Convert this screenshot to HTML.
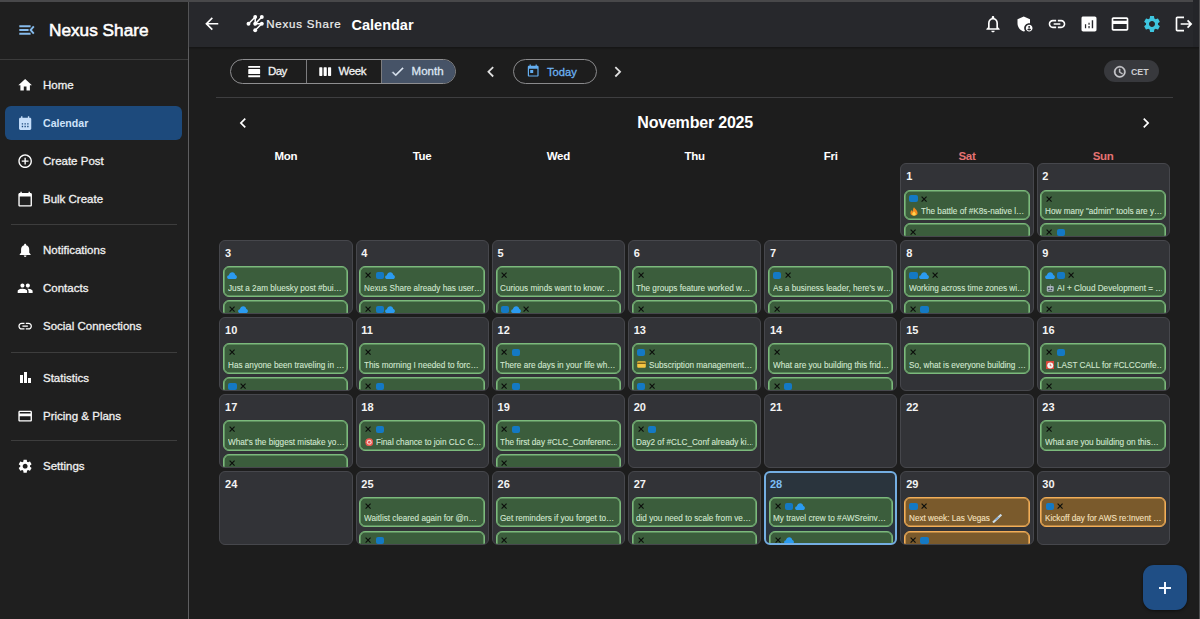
<!DOCTYPE html>
<html><head><meta charset="utf-8"><style>
*{box-sizing:border-box;margin:0;padding:0}
html,body{width:1200px;height:619px;overflow:hidden;background:#1d1d1d;font-family:"Liberation Sans",sans-serif;color:#fff}
.abs{position:absolute}
.t{line-height:1;white-space:nowrap}
.cell{border-radius:6px;overflow:hidden}
.card{border-radius:6px}
</style></head><body>
<div class="abs" style="left:0;top:0;width:188px;height:619px;background:#1f1f1f"></div>
<svg class="abs" style="left:0;top:0;width:40px;height:40px" viewBox="0 0 40 40"><g stroke="#86bbec" stroke-width="1.9" fill="none"><path d="M19.3 26.2H30.6M19.3 30H28.6M19.3 33.8H30.6"/><path d="M33.8 26.4L30.6 30L33.8 33.6" stroke-linejoin="miter"/></g></svg>
<div class="abs t" style="left:49.2px;top:21.67px;font-size:17.4px;color:#fff;font-weight:normal;-webkit-text-stroke:0.55px #fff;transform:scaleX(0.99);transform-origin:0 0">Nexus Share</div>
<div class="abs" style="left:0;top:58.5px;width:188px;height:1.2px;background:#3b3b3b"></div>
<div class="abs" style="left:5px;top:106px;width:177px;height:34px;border-radius:6px;background:#1d4a7c"></div>
<svg class="abs" style="left:17.05px;top:76.75px;width:16.3px;height:16.3px" viewBox="0 0 24 24"><path fill="#fff" d="M10 20v-6h4v6h5v-8h3L12 3 2 12h3v8z"/></svg>
<div class="abs t" style="left:43px;top:79.77px;font-size:11.5px;color:#f0f0f0;font-weight:normal;-webkit-text-stroke:0.3px #f0f0f0">Home</div>
<svg class="abs" style="left:17.05px;top:115.35px;width:16.3px;height:16.3px" viewBox="0 0 24 24"><path fill="#c5defa" d="M19 4h-1V2h-2v2H8V2H6v2H5c-1.11 0-1.99.9-1.99 2L3 20c0 1.1.89 2 2 2h14c1.1 0 2-.9 2-2V6c0-1.1-.9-2-2-2zM9 14H7v-2h2v2zm4 0h-2v-2h2v2zm4 0h-2v-2h2v2zm-8 4H7v-2h2v2zm4 0h-2v-2h2v2zm4 0h-2v-2h2v2z"/></svg>
<div class="abs t" style="left:43px;top:118.27px;font-size:11.5px;color:#cfe3fa;font-weight:bold;transform:scaleX(0.92);transform-origin:0 0">Calendar</div>
<svg class="abs" style="left:17.05px;top:153.15px;width:16.3px;height:16.3px" viewBox="0 0 24 24"><path fill="#fff" d="M13 7h-2v4H7v2h4v4h2v-4h4v-2h-4V7zm-1-5C6.48 2 2 6.48 2 12s4.48 10 10 10 10-4.48 10-10S17.52 2 12 2zm0 18c-4.41 0-8-3.59-8-8s3.59-8 8-8 8 3.59 8 8-3.59 8-8 8z"/></svg>
<div class="abs t" style="left:43px;top:156.17px;font-size:11.5px;color:#f0f0f0;font-weight:normal;-webkit-text-stroke:0.3px #f0f0f0">Create Post</div>
<svg class="abs" style="left:17.05px;top:191.25px;width:16.3px;height:16.3px" viewBox="0 0 24 24"><path fill="#fff" d="M20 3h-1V1h-2v2H7V1H5v2H4c-1.1 0-2 .9-2 2v16c0 1.1.9 2 2 2h16c1.1 0 2-.9 2-2V5c0-1.1-.9-2-2-2zm0 18H4V8h16v13z"/></svg>
<div class="abs t" style="left:43px;top:194.27px;font-size:11.5px;color:#f0f0f0;font-weight:normal;-webkit-text-stroke:0.3px #f0f0f0">Bulk Create</div>
<svg class="abs" style="left:17.05px;top:242.25px;width:16.3px;height:16.3px" viewBox="0 0 24 24"><path fill="#fff" d="M12 22c1.1 0 2-.9 2-2h-4c0 1.1.89 2 2 2zm6-6v-5c0-3.07-1.64-5.64-4.5-6.32V4c0-.83-.67-1.5-1.5-1.5s-1.5.67-1.5 1.5v.68C7.63 5.36 6 7.92 6 11v5l-2 2v1h16v-1l-2-2z"/></svg>
<div class="abs t" style="left:43px;top:245.27px;font-size:11.5px;color:#f0f0f0;font-weight:normal;-webkit-text-stroke:0.3px #f0f0f0">Notifications</div>
<svg class="abs" style="left:17.05px;top:280.35px;width:16.3px;height:16.3px" viewBox="0 0 24 24"><path fill="#fff" d="M16 11c1.66 0 2.99-1.34 2.99-3S17.66 5 16 5c-1.66 0-3 1.34-3 3s1.34 3 3 3zm-8 0c1.66 0 2.99-1.34 2.99-3S9.66 5 8 5C6.34 5 5 6.34 5 8s1.34 3 3 3zm0 2c-2.33 0-7 1.17-7 3.5V19h14v-2.5c0-2.33-4.67-3.5-7-3.5zm8 0c-.29 0-.62.02-.97.05 1.16.84 1.97 1.97 1.97 3.45V19h6v-2.5c0-2.33-4.67-3.5-7-3.5z"/></svg>
<div class="abs t" style="left:43px;top:283.37px;font-size:11.5px;color:#f0f0f0;font-weight:normal;-webkit-text-stroke:0.3px #f0f0f0">Contacts</div>
<svg class="abs" style="left:17.05px;top:318.45px;width:16.3px;height:16.3px" viewBox="0 0 24 24"><path fill="#fff" d="M3.9 12c0-1.71 1.39-3.1 3.1-3.1h4V7H7c-2.76 0-5 2.24-5 5s2.24 5 5 5h4v-1.9H7c-1.71 0-3.1-1.39-3.1-3.1zM8 13h8v-2H8v2zm9-6h-4v1.9h4c1.71 0 3.1 1.39 3.1 3.1s-1.39 3.1-3.1 3.1h-4V17h4c2.76 0 5-2.24 5-5s-2.24-5-5-5z"/></svg>
<div class="abs t" style="left:43px;top:321.47px;font-size:11.5px;color:#f0f0f0;font-weight:normal;-webkit-text-stroke:0.3px #f0f0f0">Social Connections</div>
<div class="abs" style="left:19.9px;top:375.1px;width:3.1px;height:7.8px;background:#fff"></div><div class="abs" style="left:24px;top:371.8px;width:3.1px;height:11.1px;background:#fff"></div><div class="abs" style="left:28px;top:377.6px;width:3px;height:5.3px;background:#fff"></div>
<div class="abs t" style="left:43px;top:372.57px;font-size:11.5px;color:#f0f0f0;font-weight:normal;-webkit-text-stroke:0.3px #f0f0f0">Statistics</div>
<svg class="abs" style="left:17.05px;top:407.75px;width:16.3px;height:16.3px" viewBox="0 0 24 24"><path fill="#fff" d="M20 4H4c-1.11 0-1.99.89-1.99 2L2 18c0 1.11.89 2 2 2h16c1.11 0 2-.89 2-2V6c0-1.11-.89-2-2-2zm0 14H4v-6h16v6zm0-10H4V6h16v2z"/></svg>
<div class="abs t" style="left:43px;top:410.77px;font-size:11.5px;color:#f0f0f0;font-weight:normal;-webkit-text-stroke:0.3px #f0f0f0">Pricing &amp; Plans</div>
<svg class="abs" style="left:17.05px;top:458.25px;width:16.3px;height:16.3px" viewBox="0 0 24 24"><path fill="#fff" d="M19.14 12.94c.04-.3.06-.61.06-.94 0-.32-.02-.64-.07-.94l2.03-1.58c.18-.14.23-.41.12-.61l-1.92-3.32c-.12-.22-.37-.29-.59-.22l-2.39.96c-.5-.38-1.03-.7-1.62-.94l-.36-2.54c-.04-.24-.24-.41-.48-.41h-3.84c-.24 0-.43.17-.47.41l-.36 2.54c-.59.24-1.13.57-1.62.94l-2.39-.96c-.22-.08-.47 0-.59.22L2.74 8.87c-.12.21-.08.47.12.61l2.03 1.58c-.05.3-.09.63-.09.94s.02.64.07.94l-2.03 1.58c-.18.14-.23.41-.12.61l1.92 3.32c.12.22.37.29.59.22l2.39-.96c.5.38 1.03.7 1.62.94l.36 2.54c.05.24.24.41.48.41h3.84c.24 0 .44-.17.47-.41l.36-2.54c.59-.24 1.13-.56 1.62-.94l2.39.96c.22.08.47 0 .59-.22l1.92-3.32c.12-.22.07-.47-.12-.61l-2.01-1.58zM12 15.6c-1.98 0-3.6-1.62-3.6-3.6s1.62-3.6 3.6-3.6 3.6 1.62 3.6 3.6-1.62 3.6-3.6 3.6z"/></svg>
<div class="abs t" style="left:43px;top:461.27px;font-size:11.5px;color:#f0f0f0;font-weight:normal;-webkit-text-stroke:0.3px #f0f0f0">Settings</div>
<div class="abs" style="left:10.5px;top:224.0px;width:166px;height:1.2px;background:#3d3d3d"></div>
<div class="abs" style="left:10.5px;top:351.5px;width:166px;height:1.2px;background:#3d3d3d"></div>
<div class="abs" style="left:10.5px;top:440.3px;width:166px;height:1.2px;background:#3d3d3d"></div>
<div class="abs" style="left:188px;top:0;width:1.2px;height:619px;background:#5e5e60"></div>
<div class="abs" style="left:189px;top:0;width:1011px;height:46.5px;background:#27282c;box-shadow:0 1px 2px rgba(0,0,0,.35)"></div>
<div class="abs" style="left:0;top:0;width:1200px;height:1.6px;background:#48484a"></div>
<svg class="abs" style="left:201.8px;top:13.8px;width:19.5px;height:19.5px" viewBox="0 0 24 24"><path fill="#fff" d="M20 11H7.83l5.59-5.59L12 4l-8 8 8 8 1.41-1.41L7.83 13H20v-2z"/></svg>
<svg class="abs" style="left:244px;top:12px;width:24px;height:24px" viewBox="244 12 24 24">
<g stroke="#fff" stroke-width="1.5" fill="none"><path d="M248.5 23.8L255.2 17L255.2 23.8L261.8 17M255.2 23.8L261.8 23.8L255.2 30.2"/></g>
<g fill="#fff"><circle cx="248.5" cy="23.8" r="1.95"/><circle cx="255.2" cy="17" r="1.95"/><circle cx="261.8" cy="17" r="1.95"/>
<circle cx="255.2" cy="23.8" r="1.95"/><circle cx="261.8" cy="23.8" r="1.95"/><circle cx="255.2" cy="30.2" r="1.95"/></g></svg>
<div class="abs t" style="left:266.2px;top:18.97px;font-size:11.5px;color:#f0f0f0;font-weight:normal;letter-spacing:0.8px;-webkit-text-stroke:0.2px #f0f0f0">Nexus Share</div>
<div class="abs t" style="left:351.5px;top:17.83px;font-size:14.5px;color:#fff;font-weight:bold">Calendar</div>
<svg class="abs" style="left:983.4px;top:14.0px;width:20px;height:20px" viewBox="0 0 24 24"><path fill="#fff" d="M12 22c1.1 0 2-.9 2-2h-4c0 1.1.9 2 2 2zm6-6v-5c0-3.07-1.63-5.64-4.5-6.32V4c0-.83-.67-1.5-1.5-1.5s-1.5.67-1.5 1.5v.68C7.64 5.36 6 7.92 6 11v5l-2 2v1h16v-1l-2-2zm-2 1H8v-6c0-2.48 1.51-4.5 4-4.5s4 2.02 4 4.5v6z"/></svg>
<svg class="abs" style="left:1014.8px;top:14.0px;width:20px;height:20px" viewBox="0 0 24 24"><path fill="#fff" d="M17 11c.34 0 .67.04 1 .09V6.27L10.5 3 3 6.27v4.91c0 4.54 3.2 8.79 7.5 9.82.55-.13 1.08-.32 1.6-.55-.69-.98-1.1-2.17-1.1-3.45 0-3.31 2.69-6 6-6zM17 13c-2.21 0-4 1.79-4 4s1.79 4 4 4 4-1.79 4-4-1.79-4-4-4zm0 1.38c.62 0 1.120.51 1.12 1.12s-.51 1.12-1.12 1.12-1.12-.51-1.12-1.12.5-1.12 1.12-1.12zm0 5.37c-.93 0-1.74-.46-2.24-1.17.05-.72 1.51-1.080 2.24-1.08s2.19.36 2.24 1.08c-.5.71-1.31 1.17-2.24 1.17z"/></svg>
<svg class="abs" style="left:1047.0px;top:14.0px;width:20px;height:20px" viewBox="0 0 24 24"><path fill="#fff" d="M3.9 12c0-1.71 1.39-3.1 3.1-3.1h4V7H7c-2.76 0-5 2.24-5 5s2.24 5 5 5h4v-1.9H7c-1.71 0-3.1-1.39-3.1-3.1zM8 13h8v-2H8v2zm9-6h-4v1.9h4c1.71 0 3.1 1.39 3.1 3.1s-1.39 3.1-3.1 3.1h-4V17h4c2.76 0 5-2.24 5-5s-2.24-5-5-5z"/></svg>
<svg class="abs" style="left:1078.7px;top:14.0px;width:20px;height:20px" viewBox="0 0 24 24"><path fill="#fff" d="M19 3H5c-.6 0-2 .4-2 2v14c0 1.1.9 2 2 2h14c1.1 0 2-.9 2-2V5c0-1.1-.9-2-2-2zM8.6 17H7.1v-4.8h1.5V17zm4.2 0h-1.5v-2.5h1.5V17zm0-4.2h-1.5v-2.2h1.5v2.2zm4.2 4.2h-1.7V7.5h1.7V17z"/></svg>
<svg class="abs" style="left:1110.3px;top:14.0px;width:20px;height:20px" viewBox="0 0 24 24"><path fill="#fff" d="M20 4H4c-1.11 0-1.99.89-1.99 2L2 18c0 1.11.89 2 2 2h16c1.11 0 2-.89 2-2V6c0-1.11-.89-2-2-2zm0 14H4v-6h16v6zm0-10H4V6h16v2z"/></svg>
<svg class="abs" style="left:1142.3px;top:14.0px;width:20px;height:20px" viewBox="0 0 24 24"><path fill="#3ec6e0" d="M19.14 12.94c.04-.3.06-.61.06-.94 0-.32-.02-.64-.07-.94l2.03-1.58c.18-.14.23-.41.12-.61l-1.92-3.32c-.12-.22-.37-.29-.59-.22l-2.39.96c-.5-.38-1.03-.7-1.62-.94l-.36-2.54c-.04-.24-.24-.41-.48-.41h-3.84c-.24 0-.43.17-.47.41l-.36 2.54c-.59.24-1.13.57-1.62.94l-2.39-.96c-.22-.08-.47 0-.59.22L2.74 8.87c-.12.21-.08.47.12.61l2.03 1.58c-.05.3-.09.63-.09.94s.02.64.07.94l-2.03 1.58c-.18.14-.23.41-.12.61l1.92 3.32c.12.22.37.29.59.22l2.39-.96c.5.38 1.03.7 1.62.94l.36 2.54c.05.24.24.41.48.41h3.84c.24 0 .44-.17.47-.41l.36-2.54c.59-.24 1.13-.56 1.62-.94l2.39.96c.22.08.47 0 .59-.22l1.92-3.32c.12-.22.07-.47-.12-.61l-2.01-1.58zM12 15.6c-1.98 0-3.6-1.62-3.6-3.6s1.62-3.6 3.6-3.6 3.6 1.62 3.6 3.6-1.62 3.6-3.6 3.6z"/></svg>
<svg class="abs" style="left:1174.1px;top:14.0px;width:20px;height:20px" viewBox="0 0 24 24"><path fill="#fff" d="M17 7l-1.41 1.41L18.17 11H8v2h10.17l-2.58 2.58L17 17l5-5zM4 5h8V3H4c-1.1 0-2 .9-2 2v14c0 1.1.9 2 2 2h8v-2H4V5z"/></svg>
<div class="abs" style="left:1193px;top:0;width:6px;height:46.5px;background:#242529"></div>
<div class="abs" style="left:1199px;top:0;width:1px;height:619px;background:#4c4c4e"></div>
<div class="abs" style="left:230px;top:58.8px;width:226.4px;height:25px;border:1.2px solid #8e8e90;border-radius:12.5px;overflow:hidden"><div class="abs" style="left:150px;top:0;width:80px;height:25px;background:#465367"></div><div class="abs" style="left:74.6px;top:0;width:1.2px;height:25px;background:#7c7c7e"></div><div class="abs" style="left:149.6px;top:0;width:1.2px;height:25px;background:#7c7c7e"></div></div>
<svg class="abs" style="left:246.6px;top:64.0px;width:15px;height:15px" viewBox="0 0 24 24"><path fill="#fff" d="M2 21h19v-3H2v3zM20 8H3c-.55 0-1 .45-1 1v6c0 .55.45 1 1 1h17c.55 0 1-.45 1-1V9c0-.55-.45-1-1-1zM2 3v3h19V3H2z"/></svg>
<div class="abs t" style="left:267.9px;top:66.17px;font-size:11.5px;color:#f2f2f2;font-weight:normal;letter-spacing:-0.5px;-webkit-text-stroke:0.3px #f2f2f2">Day</div>
<svg class="abs" style="left:317.5px;top:63.6px;width:15px;height:15px" viewBox="0 0 24 24"><path fill="#fff" d="M6 5H3c-.55 0-1 .45-1 1v12c0 .55.45 1 1 1h3c.55 0 1-.45 1-1V6c0-.55-.45-1-1-1zm14 0h-3c-.55 0-1 .45-1 1v12c0 .55.45 1 1 1h3c.55 0 1-.45 1-1V6c0-.55-.45-1-1-1zm-7 0h-3c-.55 0-1 .45-1 1v12c0 .55.45 1 1 1h3c.55 0 1-.45 1-1V6c0-.55-.45-1-1-1z"/></svg>
<div class="abs t" style="left:338.6px;top:66.17px;font-size:11.5px;color:#f2f2f2;font-weight:normal;letter-spacing:-0.4px;-webkit-text-stroke:0.3px #f2f2f2">Week</div>
<svg class="abs" style="left:390.2px;top:63.5px;width:15.3px;height:15.3px;stroke:#dde6f2;stroke-width:0.6" viewBox="0 0 24 24"><path fill="#dde6f2" d="M9 16.17L4.83 12l-1.42 1.41L9 19 21 7l-1.41-1.41z"/></svg>
<div class="abs t" style="left:411.6px;top:66.27px;font-size:11.5px;color:#dde6f2;font-weight:normal;-webkit-text-stroke:0.3px #dde6f2">Month</div>
<svg class="abs" style="left:480.3px;top:60.9px;width:21.5px;height:21.5px" viewBox="0 0 24 24"><path fill="#e0e0e0" d="M15.41 7.41L14 6l-6 6 6 6 1.41-1.41L10.83 12z"/></svg>
<div class="abs" style="left:513.3px;top:58.8px;width:83.4px;height:25.6px;border:1.2px solid #8a8a8c;border-radius:13px"></div>
<svg class="abs" style="left:525.7px;top:64.2px;width:14.4px;height:14.4px" viewBox="0 0 24 24"><path fill="#64aef0" d="M19 3h-1V1h-2v2H8V1H6v2H5c-1.11 0-1.99.9-1.99 2L3 19c0 1.1.89 2 2 2h14c1.1 0 2-.9 2-2V5c0-1.1-.9-2-2-2zm0 16H5V8h14v11zM7 10h5v5H7z"/></svg>
<div class="abs t" style="left:547.0px;top:67.12px;font-size:11.2px;color:#6cb2f2;font-weight:normal;-webkit-text-stroke:0.3px #6cb2f2">Today</div>
<svg class="abs" style="left:607.2px;top:60.9px;width:21.5px;height:21.5px" viewBox="0 0 24 24"><path fill="#e0e0e0" d="M10 6L8.59 7.41 13.17 12l-4.58 4.59L10 18l6-6z"/></svg>
<div class="abs" style="left:1104.4px;top:60.3px;width:54.3px;height:21.7px;border-radius:11px;background:#38393d"></div>
<svg class="abs" style="left:1112.6px;top:64.8px;width:13.6px;height:13.6px;stroke:#cfcfd3;stroke-width:0.9" viewBox="0 0 24 24"><path fill="#cfcfd3" d="M11.99 2C6.47 2 2 6.48 2 12s4.47 10 9.99 10C17.52 22 22 17.52 22 12S17.52 2 11.99 2zM12 20c-4.42 0-8-3.58-8-8s3.58-8 8-8 8 3.58 8 8-3.58 8-8 8zm.5-13H11v6l5.25 3.15.75-1.23-4.5-2.67z"/></svg>
<div class="abs t" style="left:1131.0px;top:67.10px;font-size:9.8px;color:#cdcdd1;font-weight:bold;transform:scaleX(0.9);transform-origin:0 0">CET</div>
<div class="abs" style="left:216px;top:96.8px;width:957px;height:1.2px;background:#3e3e40"></div>
<svg class="abs" style="left:233.2px;top:112.9px;width:20px;height:20px" viewBox="0 0 24 24"><path fill="#fff" d="M15.41 7.41L14 6l-6 6 6 6 1.41-1.41L10.83 12z"/></svg>
<svg class="abs" style="left:1135.7px;top:113.2px;width:20px;height:20px" viewBox="0 0 24 24"><path fill="#fff" d="M10 6L8.59 7.41 13.17 12l-4.58 4.59L10 18l6-6z"/></svg>
<div class="abs t" style="left:637.3px;top:115.16px;font-size:16px;color:#fff;font-weight:bold;letter-spacing:-0.2px">November 2025</div>
<div class="abs t" style="left:245.91px;width:80px;text-align:center;top:151.17px;font-size:11.5px;letter-spacing:-0.3px;font-weight:bold;color:#fff">Mon</div>
<div class="abs t" style="left:382.12px;width:80px;text-align:center;top:151.17px;font-size:11.5px;letter-spacing:-0.3px;font-weight:bold;color:#fff">Tue</div>
<div class="abs t" style="left:518.33px;width:80px;text-align:center;top:151.17px;font-size:11.5px;letter-spacing:-0.3px;font-weight:bold;color:#fff">Wed</div>
<div class="abs t" style="left:654.54px;width:80px;text-align:center;top:151.17px;font-size:11.5px;letter-spacing:-0.3px;font-weight:bold;color:#fff">Thu</div>
<div class="abs t" style="left:790.75px;width:80px;text-align:center;top:151.17px;font-size:11.5px;letter-spacing:-0.3px;font-weight:bold;color:#fff">Fri</div>
<div class="abs t" style="left:926.96px;width:80px;text-align:center;top:151.17px;font-size:11.5px;letter-spacing:-0.3px;font-weight:bold;color:#e57373">Sat</div>
<div class="abs t" style="left:1063.16px;width:80px;text-align:center;top:151.17px;font-size:11.5px;letter-spacing:-0.3px;font-weight:bold;color:#e57373">Sun</div>
<div class="abs cell" style="left:900.35px;top:163.20px;width:133.21px;height:73.90px;background:#323337;border:1px solid #46474c">
<div class="abs t" style="left:4.80px;top:7.29px;font-size:11px;font-weight:bold;color:#f4f4f4">1</div>
<div class="abs card" style="left:2.90px;top:25.40px;width:125.31px;height:30.3px;background:#3b5d3c;border:1px solid #7cba7c;box-shadow:inset 0 0 0 0.6px #7cba7c"></div>
<div class="abs" style="left:8.10px;top:31.30px;width:8.2px;height:7px;border-radius:2px;background:#1479c4"></div>
<svg class="abs" style="left:19.60px;top:31.40px;width:6.2px;height:6.2px" viewBox="0 0 10 10"><path d="M1 1L9 9M9 1L1 9" stroke="#0c0f0c" stroke-width="1.9" fill="none"/></svg>
<svg class="abs" style="left:8.30px;top:42.80px;width:8px;height:9px" viewBox="0 0 8 9"><path d="M4 0.3C5 2 7.6 3.6 7.6 6C7.6 7.8 6 8.8 4 8.8C2 8.8 0.4 7.8 0.4 6C0.4 4.6 1.3 3.6 2 3.1C2.1 4 2.6 4.6 3 4.7C2.8 3 3.2 1.3 4 0.3Z" fill="#f28a1e"/><path d="M4 4.2C4.8 5.2 5.8 6 5.8 7C5.8 8 5 8.6 4 8.6C3 8.6 2.2 8 2.2 7C2.2 6 3.3 5.2 4 4.2Z" fill="#ffd34d"/></svg>
<div class="abs t" style="left:19.80px;top:42.63px;width:118.65px;font-size:9.3px;color:#d4e8d2;-webkit-text-stroke:0.1px #d4e8d2;white-space:nowrap;overflow:hidden;transform:scaleX(0.88);transform-origin:0 0">The battle of #K8s-native l…</div>
<div class="abs card" style="left:2.90px;top:59.30px;width:125.31px;height:30.3px;background:#3b5d3c;border:1px solid #7cba7c;box-shadow:inset 0 0 0 0.6px #7cba7c"></div>
<svg class="abs" style="left:8.70px;top:65.30px;width:6.2px;height:6.2px" viewBox="0 0 10 10"><path d="M1 1L9 9M9 1L1 9" stroke="#0c0f0c" stroke-width="1.9" fill="none"/></svg>
</div>
<div class="abs cell" style="left:1036.56px;top:163.20px;width:133.21px;height:73.90px;background:#323337;border:1px solid #46474c">
<div class="abs t" style="left:4.80px;top:7.29px;font-size:11px;font-weight:bold;color:#f4f4f4">2</div>
<div class="abs card" style="left:2.90px;top:25.40px;width:125.31px;height:30.3px;background:#3b5d3c;border:1px solid #7cba7c;box-shadow:inset 0 0 0 0.6px #7cba7c"></div>
<svg class="abs" style="left:8.70px;top:31.40px;width:6.2px;height:6.2px" viewBox="0 0 10 10"><path d="M1 1L9 9M9 1L1 9" stroke="#0c0f0c" stroke-width="1.9" fill="none"/></svg>
<div class="abs t" style="left:7.50px;top:42.63px;width:132.62px;font-size:9.3px;color:#d4e8d2;-webkit-text-stroke:0.1px #d4e8d2;white-space:nowrap;overflow:hidden;transform:scaleX(0.88);transform-origin:0 0">How many &quot;admin&quot; tools are y…</div>
<div class="abs card" style="left:2.90px;top:59.30px;width:125.31px;height:30.3px;background:#3b5d3c;border:1px solid #7cba7c;box-shadow:inset 0 0 0 0.6px #7cba7c"></div>
<svg class="abs" style="left:8.70px;top:65.30px;width:6.2px;height:6.2px" viewBox="0 0 10 10"><path d="M1 1L9 9M9 1L1 9" stroke="#0c0f0c" stroke-width="1.9" fill="none"/></svg>
<div class="abs" style="left:19.00px;top:65.20px;width:8.2px;height:7px;border-radius:2px;background:#1479c4"></div>
</div>
<div class="abs cell" style="left:219.30px;top:240.10px;width:133.21px;height:73.90px;background:#323337;border:1px solid #46474c">
<div class="abs t" style="left:4.80px;top:7.29px;font-size:11px;font-weight:bold;color:#f4f4f4">3</div>
<div class="abs card" style="left:2.90px;top:25.40px;width:125.31px;height:30.3px;background:#3b5d3c;border:1px solid #7cba7c;box-shadow:inset 0 0 0 0.6px #7cba7c"></div>
<svg class="abs" style="left:7.10px;top:31.10px;width:10px;height:7.2px" viewBox="0 0 10 7.2"><path d="M2.2 7.1C0.9 7.1 0.1 6.2 0.1 5.1C0.1 4.1 0.9 3.3 1.9 3.2C2.3 1.4 3.6 0.2 5.2 0.2C6.9 0.2 8.1 1.4 8.3 3.1C9.3 3.3 9.9 4.1 9.9 5.1C9.9 6.2 9.1 7.1 7.9 7.1Z" fill="#2b9bf0"/></svg>
<div class="abs t" style="left:7.50px;top:42.63px;width:132.62px;font-size:9.3px;color:#d4e8d2;-webkit-text-stroke:0.1px #d4e8d2;white-space:nowrap;overflow:hidden;transform:scaleX(0.88);transform-origin:0 0">Just a 2am bluesky post #bui…</div>
<div class="abs card" style="left:2.90px;top:59.30px;width:125.31px;height:30.3px;background:#3b5d3c;border:1px solid #7cba7c;box-shadow:inset 0 0 0 0.6px #7cba7c"></div>
<svg class="abs" style="left:8.70px;top:65.30px;width:6.2px;height:6.2px" viewBox="0 0 10 10"><path d="M1 1L9 9M9 1L1 9" stroke="#0c0f0c" stroke-width="1.9" fill="none"/></svg>
<svg class="abs" style="left:18.00px;top:65.00px;width:10px;height:7.2px" viewBox="0 0 10 7.2"><path d="M2.2 7.1C0.9 7.1 0.1 6.2 0.1 5.1C0.1 4.1 0.9 3.3 1.9 3.2C2.3 1.4 3.6 0.2 5.2 0.2C6.9 0.2 8.1 1.4 8.3 3.1C9.3 3.3 9.9 4.1 9.9 5.1C9.9 6.2 9.1 7.1 7.9 7.1Z" fill="#2b9bf0"/></svg>
</div>
<div class="abs cell" style="left:355.51px;top:240.10px;width:133.21px;height:73.90px;background:#323337;border:1px solid #46474c">
<div class="abs t" style="left:4.80px;top:7.29px;font-size:11px;font-weight:bold;color:#f4f4f4">4</div>
<div class="abs card" style="left:2.90px;top:25.40px;width:125.31px;height:30.3px;background:#3b5d3c;border:1px solid #7cba7c;box-shadow:inset 0 0 0 0.6px #7cba7c"></div>
<svg class="abs" style="left:8.70px;top:31.40px;width:6.2px;height:6.2px" viewBox="0 0 10 10"><path d="M1 1L9 9M9 1L1 9" stroke="#0c0f0c" stroke-width="1.9" fill="none"/></svg>
<div class="abs" style="left:19.00px;top:31.30px;width:8.2px;height:7px;border-radius:2px;background:#1479c4"></div>
<svg class="abs" style="left:28.90px;top:31.10px;width:10px;height:7.2px" viewBox="0 0 10 7.2"><path d="M2.2 7.1C0.9 7.1 0.1 6.2 0.1 5.1C0.1 4.1 0.9 3.3 1.9 3.2C2.3 1.4 3.6 0.2 5.2 0.2C6.9 0.2 8.1 1.4 8.3 3.1C9.3 3.3 9.9 4.1 9.9 5.1C9.9 6.2 9.1 7.1 7.9 7.1Z" fill="#2b9bf0"/></svg>
<div class="abs t" style="left:7.50px;top:42.63px;width:132.62px;font-size:9.3px;color:#d4e8d2;-webkit-text-stroke:0.1px #d4e8d2;white-space:nowrap;overflow:hidden;transform:scaleX(0.88);transform-origin:0 0">Nexus Share already has user…</div>
<div class="abs card" style="left:2.90px;top:59.30px;width:125.31px;height:30.3px;background:#3b5d3c;border:1px solid #7cba7c;box-shadow:inset 0 0 0 0.6px #7cba7c"></div>
<svg class="abs" style="left:8.70px;top:65.30px;width:6.2px;height:6.2px" viewBox="0 0 10 10"><path d="M1 1L9 9M9 1L1 9" stroke="#0c0f0c" stroke-width="1.9" fill="none"/></svg>
<div class="abs" style="left:19.00px;top:65.20px;width:8.2px;height:7px;border-radius:2px;background:#1479c4"></div>
<svg class="abs" style="left:28.90px;top:65.00px;width:10px;height:7.2px" viewBox="0 0 10 7.2"><path d="M2.2 7.1C0.9 7.1 0.1 6.2 0.1 5.1C0.1 4.1 0.9 3.3 1.9 3.2C2.3 1.4 3.6 0.2 5.2 0.2C6.9 0.2 8.1 1.4 8.3 3.1C9.3 3.3 9.9 4.1 9.9 5.1C9.9 6.2 9.1 7.1 7.9 7.1Z" fill="#2b9bf0"/></svg>
</div>
<div class="abs cell" style="left:491.72px;top:240.10px;width:133.21px;height:73.90px;background:#323337;border:1px solid #46474c">
<div class="abs t" style="left:4.80px;top:7.29px;font-size:11px;font-weight:bold;color:#f4f4f4">5</div>
<div class="abs card" style="left:2.90px;top:25.40px;width:125.31px;height:30.3px;background:#3b5d3c;border:1px solid #7cba7c;box-shadow:inset 0 0 0 0.6px #7cba7c"></div>
<svg class="abs" style="left:8.70px;top:31.40px;width:6.2px;height:6.2px" viewBox="0 0 10 10"><path d="M1 1L9 9M9 1L1 9" stroke="#0c0f0c" stroke-width="1.9" fill="none"/></svg>
<div class="abs t" style="left:7.50px;top:42.63px;width:132.62px;font-size:9.3px;color:#d4e8d2;-webkit-text-stroke:0.1px #d4e8d2;white-space:nowrap;overflow:hidden;transform:scaleX(0.88);transform-origin:0 0">Curious minds want to know: …</div>
<div class="abs card" style="left:2.90px;top:59.30px;width:125.31px;height:30.3px;background:#3b5d3c;border:1px solid #7cba7c;box-shadow:inset 0 0 0 0.6px #7cba7c"></div>
<div class="abs" style="left:8.10px;top:65.20px;width:8.2px;height:7px;border-radius:2px;background:#1479c4"></div>
<svg class="abs" style="left:18.00px;top:65.00px;width:10px;height:7.2px" viewBox="0 0 10 7.2"><path d="M2.2 7.1C0.9 7.1 0.1 6.2 0.1 5.1C0.1 4.1 0.9 3.3 1.9 3.2C2.3 1.4 3.6 0.2 5.2 0.2C6.9 0.2 8.1 1.4 8.3 3.1C9.3 3.3 9.9 4.1 9.9 5.1C9.9 6.2 9.1 7.1 7.9 7.1Z" fill="#2b9bf0"/></svg>
<svg class="abs" style="left:30.50px;top:65.30px;width:6.2px;height:6.2px" viewBox="0 0 10 10"><path d="M1 1L9 9M9 1L1 9" stroke="#0c0f0c" stroke-width="1.9" fill="none"/></svg>
</div>
<div class="abs cell" style="left:627.93px;top:240.10px;width:133.21px;height:73.90px;background:#323337;border:1px solid #46474c">
<div class="abs t" style="left:4.80px;top:7.29px;font-size:11px;font-weight:bold;color:#f4f4f4">6</div>
<div class="abs card" style="left:2.90px;top:25.40px;width:125.31px;height:30.3px;background:#3b5d3c;border:1px solid #7cba7c;box-shadow:inset 0 0 0 0.6px #7cba7c"></div>
<svg class="abs" style="left:8.70px;top:31.40px;width:6.2px;height:6.2px" viewBox="0 0 10 10"><path d="M1 1L9 9M9 1L1 9" stroke="#0c0f0c" stroke-width="1.9" fill="none"/></svg>
<div class="abs t" style="left:7.50px;top:42.63px;width:132.62px;font-size:9.3px;color:#d4e8d2;-webkit-text-stroke:0.1px #d4e8d2;white-space:nowrap;overflow:hidden;transform:scaleX(0.88);transform-origin:0 0">The groups feature worked w…</div>
<div class="abs card" style="left:2.90px;top:59.30px;width:125.31px;height:30.3px;background:#3b5d3c;border:1px solid #7cba7c;box-shadow:inset 0 0 0 0.6px #7cba7c"></div>
<svg class="abs" style="left:8.70px;top:65.30px;width:6.2px;height:6.2px" viewBox="0 0 10 10"><path d="M1 1L9 9M9 1L1 9" stroke="#0c0f0c" stroke-width="1.9" fill="none"/></svg>
</div>
<div class="abs cell" style="left:764.14px;top:240.10px;width:133.21px;height:73.90px;background:#323337;border:1px solid #46474c">
<div class="abs t" style="left:4.80px;top:7.29px;font-size:11px;font-weight:bold;color:#f4f4f4">7</div>
<div class="abs card" style="left:2.90px;top:25.40px;width:125.31px;height:30.3px;background:#3b5d3c;border:1px solid #7cba7c;box-shadow:inset 0 0 0 0.6px #7cba7c"></div>
<div class="abs" style="left:8.10px;top:31.30px;width:8.2px;height:7px;border-radius:2px;background:#1479c4"></div>
<svg class="abs" style="left:19.60px;top:31.40px;width:6.2px;height:6.2px" viewBox="0 0 10 10"><path d="M1 1L9 9M9 1L1 9" stroke="#0c0f0c" stroke-width="1.9" fill="none"/></svg>
<div class="abs t" style="left:7.50px;top:42.63px;width:132.62px;font-size:9.3px;color:#d4e8d2;-webkit-text-stroke:0.1px #d4e8d2;white-space:nowrap;overflow:hidden;transform:scaleX(0.88);transform-origin:0 0">As a business leader, here&#x27;s w…</div>
<div class="abs card" style="left:2.90px;top:59.30px;width:125.31px;height:30.3px;background:#3b5d3c;border:1px solid #7cba7c;box-shadow:inset 0 0 0 0.6px #7cba7c"></div>
<svg class="abs" style="left:8.70px;top:65.30px;width:6.2px;height:6.2px" viewBox="0 0 10 10"><path d="M1 1L9 9M9 1L1 9" stroke="#0c0f0c" stroke-width="1.9" fill="none"/></svg>
</div>
<div class="abs cell" style="left:900.35px;top:240.10px;width:133.21px;height:73.90px;background:#323337;border:1px solid #46474c">
<div class="abs t" style="left:4.80px;top:7.29px;font-size:11px;font-weight:bold;color:#f4f4f4">8</div>
<div class="abs card" style="left:2.90px;top:25.40px;width:125.31px;height:30.3px;background:#3b5d3c;border:1px solid #7cba7c;box-shadow:inset 0 0 0 0.6px #7cba7c"></div>
<div class="abs" style="left:8.10px;top:31.30px;width:8.2px;height:7px;border-radius:2px;background:#1479c4"></div>
<svg class="abs" style="left:18.00px;top:31.10px;width:10px;height:7.2px" viewBox="0 0 10 7.2"><path d="M2.2 7.1C0.9 7.1 0.1 6.2 0.1 5.1C0.1 4.1 0.9 3.3 1.9 3.2C2.3 1.4 3.6 0.2 5.2 0.2C6.9 0.2 8.1 1.4 8.3 3.1C9.3 3.3 9.9 4.1 9.9 5.1C9.9 6.2 9.1 7.1 7.9 7.1Z" fill="#2b9bf0"/></svg>
<svg class="abs" style="left:30.50px;top:31.40px;width:6.2px;height:6.2px" viewBox="0 0 10 10"><path d="M1 1L9 9M9 1L1 9" stroke="#0c0f0c" stroke-width="1.9" fill="none"/></svg>
<div class="abs t" style="left:7.50px;top:42.63px;width:132.62px;font-size:9.3px;color:#d4e8d2;-webkit-text-stroke:0.1px #d4e8d2;white-space:nowrap;overflow:hidden;transform:scaleX(0.88);transform-origin:0 0">Working across time zones wi…</div>
<div class="abs card" style="left:2.90px;top:59.30px;width:125.31px;height:30.3px;background:#3b5d3c;border:1px solid #7cba7c;box-shadow:inset 0 0 0 0.6px #7cba7c"></div>
<svg class="abs" style="left:8.70px;top:65.30px;width:6.2px;height:6.2px" viewBox="0 0 10 10"><path d="M1 1L9 9M9 1L1 9" stroke="#0c0f0c" stroke-width="1.9" fill="none"/></svg>
<div class="abs" style="left:19.00px;top:65.20px;width:8.2px;height:7px;border-radius:2px;background:#1479c4"></div>
</div>
<div class="abs cell" style="left:1036.56px;top:240.10px;width:133.21px;height:73.90px;background:#323337;border:1px solid #46474c">
<div class="abs t" style="left:4.80px;top:7.29px;font-size:11px;font-weight:bold;color:#f4f4f4">9</div>
<div class="abs card" style="left:2.90px;top:25.40px;width:125.31px;height:30.3px;background:#3b5d3c;border:1px solid #7cba7c;box-shadow:inset 0 0 0 0.6px #7cba7c"></div>
<svg class="abs" style="left:7.10px;top:31.10px;width:10px;height:7.2px" viewBox="0 0 10 7.2"><path d="M2.2 7.1C0.9 7.1 0.1 6.2 0.1 5.1C0.1 4.1 0.9 3.3 1.9 3.2C2.3 1.4 3.6 0.2 5.2 0.2C6.9 0.2 8.1 1.4 8.3 3.1C9.3 3.3 9.9 4.1 9.9 5.1C9.9 6.2 9.1 7.1 7.9 7.1Z" fill="#2b9bf0"/></svg>
<div class="abs" style="left:19.00px;top:31.30px;width:8.2px;height:7px;border-radius:2px;background:#1479c4"></div>
<svg class="abs" style="left:30.50px;top:31.40px;width:6.2px;height:6.2px" viewBox="0 0 10 10"><path d="M1 1L9 9M9 1L1 9" stroke="#0c0f0c" stroke-width="1.9" fill="none"/></svg>
<svg class="abs" style="left:8.30px;top:42.80px;width:8.5px;height:8.5px" viewBox="0 0 9 9"><rect x="0.8" y="2" width="7.4" height="6.2" rx="1.3" fill="#a9b3bb"/><rect x="4.1" y="0.3" width="0.8" height="1.8" fill="#a9b3bb"/><circle cx="3" cy="4.6" r="0.9" fill="#3a4450"/><circle cx="6" cy="4.6" r="0.9" fill="#3a4450"/><rect x="2.6" y="6.4" width="3.8" height="0.8" fill="#3a4450"/></svg>
<div class="abs t" style="left:19.80px;top:42.63px;width:118.65px;font-size:9.3px;color:#d4e8d2;-webkit-text-stroke:0.1px #d4e8d2;white-space:nowrap;overflow:hidden;transform:scaleX(0.88);transform-origin:0 0">AI + Cloud Development = …</div>
<div class="abs card" style="left:2.90px;top:59.30px;width:125.31px;height:30.3px;background:#3b5d3c;border:1px solid #7cba7c;box-shadow:inset 0 0 0 0.6px #7cba7c"></div>
<svg class="abs" style="left:8.70px;top:65.30px;width:6.2px;height:6.2px" viewBox="0 0 10 10"><path d="M1 1L9 9M9 1L1 9" stroke="#0c0f0c" stroke-width="1.9" fill="none"/></svg>
</div>
<div class="abs cell" style="left:219.30px;top:317.00px;width:133.21px;height:73.90px;background:#323337;border:1px solid #46474c">
<div class="abs t" style="left:4.80px;top:7.29px;font-size:11px;font-weight:bold;color:#f4f4f4">10</div>
<div class="abs card" style="left:2.90px;top:25.40px;width:125.31px;height:30.3px;background:#3b5d3c;border:1px solid #7cba7c;box-shadow:inset 0 0 0 0.6px #7cba7c"></div>
<svg class="abs" style="left:8.70px;top:31.40px;width:6.2px;height:6.2px" viewBox="0 0 10 10"><path d="M1 1L9 9M9 1L1 9" stroke="#0c0f0c" stroke-width="1.9" fill="none"/></svg>
<div class="abs t" style="left:7.50px;top:42.63px;width:132.62px;font-size:9.3px;color:#d4e8d2;-webkit-text-stroke:0.1px #d4e8d2;white-space:nowrap;overflow:hidden;transform:scaleX(0.88);transform-origin:0 0">Has anyone been traveling in …</div>
<div class="abs card" style="left:2.90px;top:59.30px;width:125.31px;height:30.3px;background:#3b5d3c;border:1px solid #7cba7c;box-shadow:inset 0 0 0 0.6px #7cba7c"></div>
<div class="abs" style="left:8.10px;top:65.20px;width:8.2px;height:7px;border-radius:2px;background:#1479c4"></div>
<svg class="abs" style="left:19.60px;top:65.30px;width:6.2px;height:6.2px" viewBox="0 0 10 10"><path d="M1 1L9 9M9 1L1 9" stroke="#0c0f0c" stroke-width="1.9" fill="none"/></svg>
</div>
<div class="abs cell" style="left:355.51px;top:317.00px;width:133.21px;height:73.90px;background:#323337;border:1px solid #46474c">
<div class="abs t" style="left:4.80px;top:7.29px;font-size:11px;font-weight:bold;color:#f4f4f4">11</div>
<div class="abs card" style="left:2.90px;top:25.40px;width:125.31px;height:30.3px;background:#3b5d3c;border:1px solid #7cba7c;box-shadow:inset 0 0 0 0.6px #7cba7c"></div>
<svg class="abs" style="left:8.70px;top:31.40px;width:6.2px;height:6.2px" viewBox="0 0 10 10"><path d="M1 1L9 9M9 1L1 9" stroke="#0c0f0c" stroke-width="1.9" fill="none"/></svg>
<div class="abs t" style="left:7.50px;top:42.63px;width:132.62px;font-size:9.3px;color:#d4e8d2;-webkit-text-stroke:0.1px #d4e8d2;white-space:nowrap;overflow:hidden;transform:scaleX(0.88);transform-origin:0 0">This morning I needed to forc…</div>
<div class="abs card" style="left:2.90px;top:59.30px;width:125.31px;height:30.3px;background:#3b5d3c;border:1px solid #7cba7c;box-shadow:inset 0 0 0 0.6px #7cba7c"></div>
<svg class="abs" style="left:8.70px;top:65.30px;width:6.2px;height:6.2px" viewBox="0 0 10 10"><path d="M1 1L9 9M9 1L1 9" stroke="#0c0f0c" stroke-width="1.9" fill="none"/></svg>
<div class="abs" style="left:19.00px;top:65.20px;width:8.2px;height:7px;border-radius:2px;background:#1479c4"></div>
</div>
<div class="abs cell" style="left:491.72px;top:317.00px;width:133.21px;height:73.90px;background:#323337;border:1px solid #46474c">
<div class="abs t" style="left:4.80px;top:7.29px;font-size:11px;font-weight:bold;color:#f4f4f4">12</div>
<div class="abs card" style="left:2.90px;top:25.40px;width:125.31px;height:30.3px;background:#3b5d3c;border:1px solid #7cba7c;box-shadow:inset 0 0 0 0.6px #7cba7c"></div>
<svg class="abs" style="left:8.70px;top:31.40px;width:6.2px;height:6.2px" viewBox="0 0 10 10"><path d="M1 1L9 9M9 1L1 9" stroke="#0c0f0c" stroke-width="1.9" fill="none"/></svg>
<div class="abs" style="left:19.00px;top:31.30px;width:8.2px;height:7px;border-radius:2px;background:#1479c4"></div>
<div class="abs t" style="left:7.50px;top:42.63px;width:132.62px;font-size:9.3px;color:#d4e8d2;-webkit-text-stroke:0.1px #d4e8d2;white-space:nowrap;overflow:hidden;transform:scaleX(0.88);transform-origin:0 0">There are days in your life wh…</div>
<div class="abs card" style="left:2.90px;top:59.30px;width:125.31px;height:30.3px;background:#3b5d3c;border:1px solid #7cba7c;box-shadow:inset 0 0 0 0.6px #7cba7c"></div>
<svg class="abs" style="left:8.70px;top:65.30px;width:6.2px;height:6.2px" viewBox="0 0 10 10"><path d="M1 1L9 9M9 1L1 9" stroke="#0c0f0c" stroke-width="1.9" fill="none"/></svg>
<div class="abs" style="left:19.00px;top:65.20px;width:8.2px;height:7px;border-radius:2px;background:#1479c4"></div>
</div>
<div class="abs cell" style="left:627.93px;top:317.00px;width:133.21px;height:73.90px;background:#323337;border:1px solid #46474c">
<div class="abs t" style="left:4.80px;top:7.29px;font-size:11px;font-weight:bold;color:#f4f4f4">13</div>
<div class="abs card" style="left:2.90px;top:25.40px;width:125.31px;height:30.3px;background:#3b5d3c;border:1px solid #7cba7c;box-shadow:inset 0 0 0 0.6px #7cba7c"></div>
<div class="abs" style="left:8.10px;top:31.30px;width:8.2px;height:7px;border-radius:2px;background:#1479c4"></div>
<svg class="abs" style="left:19.60px;top:31.40px;width:6.2px;height:6.2px" viewBox="0 0 10 10"><path d="M1 1L9 9M9 1L1 9" stroke="#0c0f0c" stroke-width="1.9" fill="none"/></svg>
<svg class="abs" style="left:8.30px;top:43.40px;width:9px;height:7px" viewBox="0 0 9 7"><rect x="0.2" y="0.3" width="8.6" height="6.4" rx="1" fill="#f5c542"/><rect x="0.2" y="1.6" width="8.6" height="1.3" fill="#6b5317"/></svg>
<div class="abs t" style="left:19.80px;top:42.63px;width:118.65px;font-size:9.3px;color:#d4e8d2;-webkit-text-stroke:0.1px #d4e8d2;white-space:nowrap;overflow:hidden;transform:scaleX(0.88);transform-origin:0 0">Subscription management…</div>
<div class="abs card" style="left:2.90px;top:59.30px;width:125.31px;height:30.3px;background:#3b5d3c;border:1px solid #7cba7c;box-shadow:inset 0 0 0 0.6px #7cba7c"></div>
<div class="abs" style="left:8.10px;top:65.20px;width:8.2px;height:7px;border-radius:2px;background:#1479c4"></div>
<svg class="abs" style="left:19.60px;top:65.30px;width:6.2px;height:6.2px" viewBox="0 0 10 10"><path d="M1 1L9 9M9 1L1 9" stroke="#0c0f0c" stroke-width="1.9" fill="none"/></svg>
</div>
<div class="abs cell" style="left:764.14px;top:317.00px;width:133.21px;height:73.90px;background:#323337;border:1px solid #46474c">
<div class="abs t" style="left:4.80px;top:7.29px;font-size:11px;font-weight:bold;color:#f4f4f4">14</div>
<div class="abs card" style="left:2.90px;top:25.40px;width:125.31px;height:30.3px;background:#3b5d3c;border:1px solid #7cba7c;box-shadow:inset 0 0 0 0.6px #7cba7c"></div>
<svg class="abs" style="left:8.70px;top:31.40px;width:6.2px;height:6.2px" viewBox="0 0 10 10"><path d="M1 1L9 9M9 1L1 9" stroke="#0c0f0c" stroke-width="1.9" fill="none"/></svg>
<div class="abs t" style="left:7.50px;top:42.63px;width:132.62px;font-size:9.3px;color:#d4e8d2;-webkit-text-stroke:0.1px #d4e8d2;white-space:nowrap;overflow:hidden;transform:scaleX(0.88);transform-origin:0 0">What are you building this frid…</div>
<div class="abs card" style="left:2.90px;top:59.30px;width:125.31px;height:30.3px;background:#3b5d3c;border:1px solid #7cba7c;box-shadow:inset 0 0 0 0.6px #7cba7c"></div>
<svg class="abs" style="left:8.70px;top:65.30px;width:6.2px;height:6.2px" viewBox="0 0 10 10"><path d="M1 1L9 9M9 1L1 9" stroke="#0c0f0c" stroke-width="1.9" fill="none"/></svg>
<div class="abs" style="left:19.00px;top:65.20px;width:8.2px;height:7px;border-radius:2px;background:#1479c4"></div>
</div>
<div class="abs cell" style="left:900.35px;top:317.00px;width:133.21px;height:73.90px;background:#323337;border:1px solid #46474c">
<div class="abs t" style="left:4.80px;top:7.29px;font-size:11px;font-weight:bold;color:#f4f4f4">15</div>
<div class="abs card" style="left:2.90px;top:25.40px;width:125.31px;height:30.3px;background:#3b5d3c;border:1px solid #7cba7c;box-shadow:inset 0 0 0 0.6px #7cba7c"></div>
<svg class="abs" style="left:8.70px;top:31.40px;width:6.2px;height:6.2px" viewBox="0 0 10 10"><path d="M1 1L9 9M9 1L1 9" stroke="#0c0f0c" stroke-width="1.9" fill="none"/></svg>
<div class="abs t" style="left:7.50px;top:42.63px;width:132.62px;font-size:9.3px;color:#d4e8d2;-webkit-text-stroke:0.1px #d4e8d2;white-space:nowrap;overflow:hidden;transform:scaleX(0.88);transform-origin:0 0">So, what is everyone building …</div>
</div>
<div class="abs cell" style="left:1036.56px;top:317.00px;width:133.21px;height:73.90px;background:#323337;border:1px solid #46474c">
<div class="abs t" style="left:4.80px;top:7.29px;font-size:11px;font-weight:bold;color:#f4f4f4">16</div>
<div class="abs card" style="left:2.90px;top:25.40px;width:125.31px;height:30.3px;background:#3b5d3c;border:1px solid #7cba7c;box-shadow:inset 0 0 0 0.6px #7cba7c"></div>
<svg class="abs" style="left:8.70px;top:31.40px;width:6.2px;height:6.2px" viewBox="0 0 10 10"><path d="M1 1L9 9M9 1L1 9" stroke="#0c0f0c" stroke-width="1.9" fill="none"/></svg>
<div class="abs" style="left:19.00px;top:31.30px;width:8.2px;height:7px;border-radius:2px;background:#1479c4"></div>
<svg class="abs" style="left:8.30px;top:42.80px;width:8.5px;height:8.5px" viewBox="0 0 9 9"><rect x="0" y="0" width="9" height="9" rx="1" fill="#d84a3c"/><circle cx="4.5" cy="4.8" r="3.2" fill="#f4f4f4"/><path d="M4.5 3v2h1.3" stroke="#d84a3c" stroke-width="0.8" fill="none"/></svg>
<div class="abs t" style="left:19.80px;top:42.63px;width:118.65px;font-size:9.3px;color:#d4e8d2;-webkit-text-stroke:0.1px #d4e8d2;white-space:nowrap;overflow:hidden;transform:scaleX(0.88);transform-origin:0 0">LAST CALL for #CLCConfe…</div>
<div class="abs card" style="left:2.90px;top:59.30px;width:125.31px;height:30.3px;background:#3b5d3c;border:1px solid #7cba7c;box-shadow:inset 0 0 0 0.6px #7cba7c"></div>
<svg class="abs" style="left:8.70px;top:65.30px;width:6.2px;height:6.2px" viewBox="0 0 10 10"><path d="M1 1L9 9M9 1L1 9" stroke="#0c0f0c" stroke-width="1.9" fill="none"/></svg>
</div>
<div class="abs cell" style="left:219.30px;top:393.90px;width:133.21px;height:73.90px;background:#323337;border:1px solid #46474c">
<div class="abs t" style="left:4.80px;top:7.29px;font-size:11px;font-weight:bold;color:#f4f4f4">17</div>
<div class="abs card" style="left:2.90px;top:25.40px;width:125.31px;height:30.3px;background:#3b5d3c;border:1px solid #7cba7c;box-shadow:inset 0 0 0 0.6px #7cba7c"></div>
<svg class="abs" style="left:8.70px;top:31.40px;width:6.2px;height:6.2px" viewBox="0 0 10 10"><path d="M1 1L9 9M9 1L1 9" stroke="#0c0f0c" stroke-width="1.9" fill="none"/></svg>
<div class="abs t" style="left:7.50px;top:42.63px;width:132.62px;font-size:9.3px;color:#d4e8d2;-webkit-text-stroke:0.1px #d4e8d2;white-space:nowrap;overflow:hidden;transform:scaleX(0.88);transform-origin:0 0">What&#x27;s the biggest mistake yo…</div>
<div class="abs card" style="left:2.90px;top:59.30px;width:125.31px;height:30.3px;background:#3b5d3c;border:1px solid #7cba7c;box-shadow:inset 0 0 0 0.6px #7cba7c"></div>
<svg class="abs" style="left:8.70px;top:65.30px;width:6.2px;height:6.2px" viewBox="0 0 10 10"><path d="M1 1L9 9M9 1L1 9" stroke="#0c0f0c" stroke-width="1.9" fill="none"/></svg>
</div>
<div class="abs cell" style="left:355.51px;top:393.90px;width:133.21px;height:73.90px;background:#323337;border:1px solid #46474c">
<div class="abs t" style="left:4.80px;top:7.29px;font-size:11px;font-weight:bold;color:#f4f4f4">18</div>
<div class="abs card" style="left:2.90px;top:25.40px;width:125.31px;height:30.3px;background:#3b5d3c;border:1px solid #7cba7c;box-shadow:inset 0 0 0 0.6px #7cba7c"></div>
<svg class="abs" style="left:8.70px;top:31.40px;width:6.2px;height:6.2px" viewBox="0 0 10 10"><path d="M1 1L9 9M9 1L1 9" stroke="#0c0f0c" stroke-width="1.9" fill="none"/></svg>
<div class="abs" style="left:19.00px;top:31.30px;width:8.2px;height:7px;border-radius:2px;background:#1479c4"></div>
<svg class="abs" style="left:8.30px;top:42.80px;width:8.5px;height:8.5px" viewBox="0 0 9 9"><circle cx="4.5" cy="4.5" r="4.2" fill="#e8584f"/><circle cx="4.5" cy="4.5" r="2.6" fill="#f6d2cf"/><circle cx="4.5" cy="4.5" r="1.3" fill="#e8584f"/></svg>
<div class="abs t" style="left:19.80px;top:42.63px;width:118.65px;font-size:9.3px;color:#d4e8d2;-webkit-text-stroke:0.1px #d4e8d2;white-space:nowrap;overflow:hidden;transform:scaleX(0.88);transform-origin:0 0">Final chance to join CLC C…</div>
</div>
<div class="abs cell" style="left:491.72px;top:393.90px;width:133.21px;height:73.90px;background:#323337;border:1px solid #46474c">
<div class="abs t" style="left:4.80px;top:7.29px;font-size:11px;font-weight:bold;color:#f4f4f4">19</div>
<div class="abs card" style="left:2.90px;top:25.40px;width:125.31px;height:30.3px;background:#3b5d3c;border:1px solid #7cba7c;box-shadow:inset 0 0 0 0.6px #7cba7c"></div>
<svg class="abs" style="left:8.70px;top:31.40px;width:6.2px;height:6.2px" viewBox="0 0 10 10"><path d="M1 1L9 9M9 1L1 9" stroke="#0c0f0c" stroke-width="1.9" fill="none"/></svg>
<div class="abs" style="left:19.00px;top:31.30px;width:8.2px;height:7px;border-radius:2px;background:#1479c4"></div>
<div class="abs t" style="left:7.50px;top:42.63px;width:132.62px;font-size:9.3px;color:#d4e8d2;-webkit-text-stroke:0.1px #d4e8d2;white-space:nowrap;overflow:hidden;transform:scaleX(0.88);transform-origin:0 0">The first day #CLC_Conferenc…</div>
<div class="abs card" style="left:2.90px;top:59.30px;width:125.31px;height:30.3px;background:#3b5d3c;border:1px solid #7cba7c;box-shadow:inset 0 0 0 0.6px #7cba7c"></div>
<svg class="abs" style="left:8.70px;top:65.30px;width:6.2px;height:6.2px" viewBox="0 0 10 10"><path d="M1 1L9 9M9 1L1 9" stroke="#0c0f0c" stroke-width="1.9" fill="none"/></svg>
</div>
<div class="abs cell" style="left:627.93px;top:393.90px;width:133.21px;height:73.90px;background:#323337;border:1px solid #46474c">
<div class="abs t" style="left:4.80px;top:7.29px;font-size:11px;font-weight:bold;color:#f4f4f4">20</div>
<div class="abs card" style="left:2.90px;top:25.40px;width:125.31px;height:30.3px;background:#3b5d3c;border:1px solid #7cba7c;box-shadow:inset 0 0 0 0.6px #7cba7c"></div>
<svg class="abs" style="left:8.70px;top:31.40px;width:6.2px;height:6.2px" viewBox="0 0 10 10"><path d="M1 1L9 9M9 1L1 9" stroke="#0c0f0c" stroke-width="1.9" fill="none"/></svg>
<div class="abs" style="left:19.00px;top:31.30px;width:8.2px;height:7px;border-radius:2px;background:#1479c4"></div>
<div class="abs t" style="left:7.50px;top:42.63px;width:132.62px;font-size:9.3px;color:#d4e8d2;-webkit-text-stroke:0.1px #d4e8d2;white-space:nowrap;overflow:hidden;transform:scaleX(0.88);transform-origin:0 0">Day2 of #CLC_Conf already ki…</div>
</div>
<div class="abs cell" style="left:764.14px;top:393.90px;width:133.21px;height:73.90px;background:#323337;border:1px solid #46474c">
<div class="abs t" style="left:4.80px;top:7.29px;font-size:11px;font-weight:bold;color:#f4f4f4">21</div>
</div>
<div class="abs cell" style="left:900.35px;top:393.90px;width:133.21px;height:73.90px;background:#323337;border:1px solid #46474c">
<div class="abs t" style="left:4.80px;top:7.29px;font-size:11px;font-weight:bold;color:#f4f4f4">22</div>
</div>
<div class="abs cell" style="left:1036.56px;top:393.90px;width:133.21px;height:73.90px;background:#323337;border:1px solid #46474c">
<div class="abs t" style="left:4.80px;top:7.29px;font-size:11px;font-weight:bold;color:#f4f4f4">23</div>
<div class="abs card" style="left:2.90px;top:25.40px;width:125.31px;height:30.3px;background:#3b5d3c;border:1px solid #7cba7c;box-shadow:inset 0 0 0 0.6px #7cba7c"></div>
<svg class="abs" style="left:8.70px;top:31.40px;width:6.2px;height:6.2px" viewBox="0 0 10 10"><path d="M1 1L9 9M9 1L1 9" stroke="#0c0f0c" stroke-width="1.9" fill="none"/></svg>
<div class="abs t" style="left:7.50px;top:42.63px;width:132.62px;font-size:9.3px;color:#d4e8d2;-webkit-text-stroke:0.1px #d4e8d2;white-space:nowrap;overflow:hidden;transform:scaleX(0.88);transform-origin:0 0">What are you building on this…</div>
</div>
<div class="abs cell" style="left:219.30px;top:470.80px;width:133.21px;height:73.90px;background:#323337;border:1px solid #46474c">
<div class="abs t" style="left:4.80px;top:7.29px;font-size:11px;font-weight:bold;color:#f4f4f4">24</div>
</div>
<div class="abs cell" style="left:355.51px;top:470.80px;width:133.21px;height:73.90px;background:#323337;border:1px solid #46474c">
<div class="abs t" style="left:4.80px;top:7.29px;font-size:11px;font-weight:bold;color:#f4f4f4">25</div>
<div class="abs card" style="left:2.90px;top:25.40px;width:125.31px;height:30.3px;background:#3b5d3c;border:1px solid #7cba7c;box-shadow:inset 0 0 0 0.6px #7cba7c"></div>
<svg class="abs" style="left:8.70px;top:31.40px;width:6.2px;height:6.2px" viewBox="0 0 10 10"><path d="M1 1L9 9M9 1L1 9" stroke="#0c0f0c" stroke-width="1.9" fill="none"/></svg>
<div class="abs t" style="left:7.50px;top:42.63px;width:132.62px;font-size:9.3px;color:#d4e8d2;-webkit-text-stroke:0.1px #d4e8d2;white-space:nowrap;overflow:hidden;transform:scaleX(0.88);transform-origin:0 0">Waitlist cleared again for @n…</div>
<div class="abs card" style="left:2.90px;top:59.30px;width:125.31px;height:30.3px;background:#3b5d3c;border:1px solid #7cba7c;box-shadow:inset 0 0 0 0.6px #7cba7c"></div>
<svg class="abs" style="left:8.70px;top:65.30px;width:6.2px;height:6.2px" viewBox="0 0 10 10"><path d="M1 1L9 9M9 1L1 9" stroke="#0c0f0c" stroke-width="1.9" fill="none"/></svg>
<div class="abs" style="left:19.00px;top:65.20px;width:8.2px;height:7px;border-radius:2px;background:#1479c4"></div>
</div>
<div class="abs cell" style="left:491.72px;top:470.80px;width:133.21px;height:73.90px;background:#323337;border:1px solid #46474c">
<div class="abs t" style="left:4.80px;top:7.29px;font-size:11px;font-weight:bold;color:#f4f4f4">26</div>
<div class="abs card" style="left:2.90px;top:25.40px;width:125.31px;height:30.3px;background:#3b5d3c;border:1px solid #7cba7c;box-shadow:inset 0 0 0 0.6px #7cba7c"></div>
<svg class="abs" style="left:8.70px;top:31.40px;width:6.2px;height:6.2px" viewBox="0 0 10 10"><path d="M1 1L9 9M9 1L1 9" stroke="#0c0f0c" stroke-width="1.9" fill="none"/></svg>
<div class="abs t" style="left:7.50px;top:42.63px;width:132.62px;font-size:9.3px;color:#d4e8d2;-webkit-text-stroke:0.1px #d4e8d2;white-space:nowrap;overflow:hidden;transform:scaleX(0.88);transform-origin:0 0">Get reminders if you forget to…</div>
<div class="abs card" style="left:2.90px;top:59.30px;width:125.31px;height:30.3px;background:#3b5d3c;border:1px solid #7cba7c;box-shadow:inset 0 0 0 0.6px #7cba7c"></div>
<svg class="abs" style="left:8.70px;top:65.30px;width:6.2px;height:6.2px" viewBox="0 0 10 10"><path d="M1 1L9 9M9 1L1 9" stroke="#0c0f0c" stroke-width="1.9" fill="none"/></svg>
</div>
<div class="abs cell" style="left:627.93px;top:470.80px;width:133.21px;height:73.90px;background:#323337;border:1px solid #46474c">
<div class="abs t" style="left:4.80px;top:7.29px;font-size:11px;font-weight:bold;color:#f4f4f4">27</div>
<div class="abs card" style="left:2.90px;top:25.40px;width:125.31px;height:30.3px;background:#3b5d3c;border:1px solid #7cba7c;box-shadow:inset 0 0 0 0.6px #7cba7c"></div>
<svg class="abs" style="left:8.70px;top:31.40px;width:6.2px;height:6.2px" viewBox="0 0 10 10"><path d="M1 1L9 9M9 1L1 9" stroke="#0c0f0c" stroke-width="1.9" fill="none"/></svg>
<div class="abs t" style="left:7.50px;top:42.63px;width:132.62px;font-size:9.3px;color:#d4e8d2;-webkit-text-stroke:0.1px #d4e8d2;white-space:nowrap;overflow:hidden;transform:scaleX(0.88);transform-origin:0 0">did you need to scale from ve…</div>
<div class="abs card" style="left:2.90px;top:59.30px;width:125.31px;height:30.3px;background:#3b5d3c;border:1px solid #7cba7c;box-shadow:inset 0 0 0 0.6px #7cba7c"></div>
<svg class="abs" style="left:8.70px;top:65.30px;width:6.2px;height:6.2px" viewBox="0 0 10 10"><path d="M1 1L9 9M9 1L1 9" stroke="#0c0f0c" stroke-width="1.9" fill="none"/></svg>
</div>
<div class="abs cell" style="left:764.14px;top:470.80px;width:133.21px;height:73.90px;background:#2a343d;border:2px solid #74aee2">
<div class="abs t" style="left:3.80px;top:6.29px;font-size:11px;font-weight:bold;color:#7cbcf4">28</div>
<div class="abs card" style="left:2.70px;top:24.40px;width:123.71px;height:30.3px;background:#3b5d3c;border:1px solid #7cba7c;box-shadow:inset 0 0 0 0.6px #7cba7c"></div>
<svg class="abs" style="left:8.50px;top:30.40px;width:6.2px;height:6.2px" viewBox="0 0 10 10"><path d="M1 1L9 9M9 1L1 9" stroke="#0c0f0c" stroke-width="1.9" fill="none"/></svg>
<div class="abs" style="left:18.80px;top:30.30px;width:8.2px;height:7px;border-radius:2px;background:#1479c4"></div>
<svg class="abs" style="left:28.70px;top:30.10px;width:10px;height:7.2px" viewBox="0 0 10 7.2"><path d="M2.2 7.1C0.9 7.1 0.1 6.2 0.1 5.1C0.1 4.1 0.9 3.3 1.9 3.2C2.3 1.4 3.6 0.2 5.2 0.2C6.9 0.2 8.1 1.4 8.3 3.1C9.3 3.3 9.9 4.1 9.9 5.1C9.9 6.2 9.1 7.1 7.9 7.1Z" fill="#2b9bf0"/></svg>
<div class="abs t" style="left:7.30px;top:41.63px;width:130.81px;font-size:9.3px;color:#d4e8d2;-webkit-text-stroke:0.1px #d4e8d2;white-space:nowrap;overflow:hidden;transform:scaleX(0.88);transform-origin:0 0">My travel crew to #AWSreinv…</div>
<div class="abs card" style="left:2.70px;top:58.30px;width:123.71px;height:30.3px;background:#3b5d3c;border:1px solid #7cba7c;box-shadow:inset 0 0 0 0.6px #7cba7c"></div>
<svg class="abs" style="left:8.50px;top:64.30px;width:6.2px;height:6.2px" viewBox="0 0 10 10"><path d="M1 1L9 9M9 1L1 9" stroke="#0c0f0c" stroke-width="1.9" fill="none"/></svg>
<svg class="abs" style="left:17.80px;top:64.00px;width:10px;height:7.2px" viewBox="0 0 10 7.2"><path d="M2.2 7.1C0.9 7.1 0.1 6.2 0.1 5.1C0.1 4.1 0.9 3.3 1.9 3.2C2.3 1.4 3.6 0.2 5.2 0.2C6.9 0.2 8.1 1.4 8.3 3.1C9.3 3.3 9.9 4.1 9.9 5.1C9.9 6.2 9.1 7.1 7.9 7.1Z" fill="#2b9bf0"/></svg>
</div>
<div class="abs cell" style="left:900.35px;top:470.80px;width:133.21px;height:73.90px;background:#323337;border:1px solid #46474c">
<div class="abs t" style="left:4.80px;top:7.29px;font-size:11px;font-weight:bold;color:#f4f4f4">29</div>
<div class="abs card" style="left:2.90px;top:25.40px;width:125.31px;height:30.3px;background:#7a5a2c;border:1px solid #f2ae58;box-shadow:inset 0 0 0 0.6px #f2ae58"></div>
<div class="abs" style="left:8.10px;top:31.30px;width:8.2px;height:7px;border-radius:2px;background:#1479c4"></div>
<svg class="abs" style="left:19.60px;top:31.40px;width:6.2px;height:6.2px" viewBox="0 0 10 10"><path d="M1 1L9 9M9 1L1 9" stroke="#0c0f0c" stroke-width="1.9" fill="none"/></svg>
<svg class="abs" style="left:91.00px;top:41.90px;width:10px;height:9px" viewBox="0 0 10 9"><path d="M1 8.5L9.3 0.6" stroke="#c9dbe8" stroke-width="2.1"/><path d="M3.5 6L6.5 3" stroke="#5a8fd0" stroke-width="1"/></svg>
<div class="abs t" style="left:7.50px;top:42.63px;width:132.62px;font-size:9.3px;color:#f7e2c0;-webkit-text-stroke:0.1px #f7e2c0;white-space:nowrap;overflow:hidden;transform:scaleX(0.88);transform-origin:0 0">Next week: Las Vegas</div>
<div class="abs card" style="left:2.90px;top:59.30px;width:125.31px;height:30.3px;background:#7a5a2c;border:1px solid #f2ae58;box-shadow:inset 0 0 0 0.6px #f2ae58"></div>
<svg class="abs" style="left:8.70px;top:65.30px;width:6.2px;height:6.2px" viewBox="0 0 10 10"><path d="M1 1L9 9M9 1L1 9" stroke="#0c0f0c" stroke-width="1.9" fill="none"/></svg>
<div class="abs" style="left:19.00px;top:65.20px;width:8.2px;height:7px;border-radius:2px;background:#1479c4"></div>
</div>
<div class="abs cell" style="left:1036.56px;top:470.80px;width:133.21px;height:73.90px;background:#323337;border:1px solid #46474c">
<div class="abs t" style="left:4.80px;top:7.29px;font-size:11px;font-weight:bold;color:#f4f4f4">30</div>
<div class="abs card" style="left:2.90px;top:25.40px;width:125.31px;height:30.3px;background:#7a5a2c;border:1px solid #f2ae58;box-shadow:inset 0 0 0 0.6px #f2ae58"></div>
<div class="abs" style="left:8.10px;top:31.30px;width:8.2px;height:7px;border-radius:2px;background:#1479c4"></div>
<svg class="abs" style="left:19.60px;top:31.40px;width:6.2px;height:6.2px" viewBox="0 0 10 10"><path d="M1 1L9 9M9 1L1 9" stroke="#0c0f0c" stroke-width="1.9" fill="none"/></svg>
<div class="abs t" style="left:7.50px;top:42.63px;width:132.62px;font-size:9.3px;color:#f7e2c0;-webkit-text-stroke:0.1px #f7e2c0;white-space:nowrap;overflow:hidden;transform:scaleX(0.88);transform-origin:0 0">Kickoff day for AWS re:Invent …</div>
</div>
<div class="abs" style="left:1143px;top:565.3px;width:44.4px;height:44.4px;border-radius:11px;background:#1f4e85;box-shadow:0 1px 3px rgba(0,0,0,.5)"></div>
<div class="abs" style="left:1158.9px;top:587.1px;width:12.2px;height:1.6px;background:#f4f8ff"></div><div class="abs" style="left:1164.2px;top:582px;width:1.6px;height:11.8px;background:#f4f8ff"></div>
</body></html>
